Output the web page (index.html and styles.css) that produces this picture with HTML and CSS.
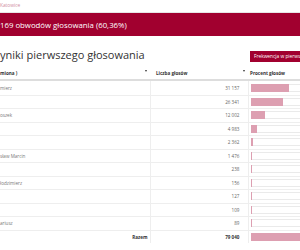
FILE: index.html
```html
<!DOCTYPE html>
<html lang="pl">
<head>
<meta charset="utf-8">
<link rel="stylesheet" href="styles.css">
</head>
<body>
<div class="crumb">Katowice</div>
<div class="banner">169 obwodów głosowania (60,36%)</div>
<div class="titlebar">
  <h1 class="title">yniki pierwszego głosowania</h1>
  <button class="btn">Frekwencja w pierwszym głosowaniu</button>
</div>
<table class="results">
  <colgroup><col class="col-name"><col class="col-votes"><col class="col-pct"></colgroup>
  <thead>
    <tr>
      <th class="c-name">miona )<span class="sort"></span></th>
      <th class="c-votes">Liczba głosów<span class="sort"></span></th>
      <th class="c-pct">Procent głosów</th>
    </tr>
  </thead>
  <tbody>
    <tr><td class="c-name">mierz</td><td class="c-votes">31 157</td><td class="c-pct"><div class="track"><div class="fill" style="width:39.42%"></div></div></td></tr>
    <tr><td class="c-name"></td><td class="c-votes">26 341</td><td class="c-pct"><div class="track"><div class="fill" style="width:33.33%"></div></div></td></tr>
    <tr><td class="c-name">oszek</td><td class="c-votes">12 002</td><td class="c-pct"><div class="track"><div class="fill" style="width:15.18%"></div></div></td></tr>
    <tr><td class="c-name"></td><td class="c-votes">4 983</td><td class="c-pct"><div class="track"><div class="fill" style="width:6.30%"></div></div></td></tr>
    <tr><td class="c-name"></td><td class="c-votes">2 362</td><td class="c-pct"><div class="track"><div class="fill" style="width:2.99%"></div></div></td></tr>
    <tr><td class="c-name">sław Marcin</td><td class="c-votes">1 476</td><td class="c-pct"><div class="track"><div class="fill" style="width:1.87%"></div></div></td></tr>
    <tr><td class="c-name"></td><td class="c-votes">238</td><td class="c-pct"><div class="track"><div class="fill" style="width:0.30%"></div></div></td></tr>
    <tr><td class="c-name">łodzimierz</td><td class="c-votes">156</td><td class="c-pct"><div class="track"><div class="fill" style="width:0.20%"></div></div></td></tr>
    <tr><td class="c-name"></td><td class="c-votes">127</td><td class="c-pct"><div class="track"><div class="fill" style="width:0.16%"></div></div></td></tr>
    <tr><td class="c-name"></td><td class="c-votes">109</td><td class="c-pct"><div class="track"><div class="fill" style="width:0.14%"></div></div></td></tr>
    <tr><td class="c-name">ariusz</td><td class="c-votes">89</td><td class="c-pct"><div class="track"><div class="fill" style="width:0.11%"></div></div></td></tr>
  </tbody>
  <tfoot>
    <tr class="total"><td class="c-name">Razem</td><td class="c-votes">79 040</td><td class="c-pct"><div class="track"><div class="fill" style="width:100%"></div></div></td></tr>
  </tfoot>
</table>
</body>
</html>
```
FILE: styles.css
```css
html, body {
  margin: 0;
  padding: 0;
  overflow: hidden;
  background: #ffffff;
}
body {
  width: 300px;
  height: 250px;
  font-family: "Open Sans", "DejaVu Sans", sans-serif;
  color: #333333;
}
.crumb {
  height: 12px;
  line-height: 11px;
  font-size: 4.8px;
  color: #cf8a9e;
  white-space: nowrap;
}
.banner {
  border-top: 1px solid #e6e6e6;
  background: #a1002f;
  color: #ffffff;
  font-size: 7.8px;
  line-height: 21px;
  padding-top: 2px;
  height: 21px;
  white-space: nowrap;
}
.titlebar {
  display: flex;
  align-items: flex-start;
  padding-top: 11px;
  padding-bottom: 4px;
  width: 400px;
}
.title {
  flex: 0 0 250px;
  margin: 0;
  font-size: 11px;
  font-weight: 400;
  line-height: 15px;
  color: #333333;
  white-space: nowrap;
}
.btn {
  margin-top: 4px;
  height: 11px;
  padding: 0 4px;
  border: none;
  background: #a1002f;
  color: #ffffff;
  font-family: "Open Sans", "DejaVu Sans", sans-serif;
  font-size: 4.8px;
  line-height: 11px;
  white-space: nowrap;
}
.results {
  width: 400px;
  table-layout: fixed;
  border-collapse: collapse;
  font-size: 4.6px;
}
.col-name { width: 150px; }
.col-votes { width: 98px; }
.col-pct { width: 152px; }
.results th {
  height: 13px;
  padding: 0;
  font-weight: 700;
  color: #333333;
  text-align: left;
  border-bottom: 2px solid #dddddd;
  position: relative;
  white-space: nowrap;
}
.results th.c-votes { padding-left: 6px; }
.results th.c-pct { padding-left: 2px; }
.sort {
  position: absolute;
  right: 3px;
  top: 4px;
  width: 0;
  height: 0;
  border-left: 1.5px solid transparent;
  border-right: 1.5px solid transparent;
  border-top: 2px solid #333333;
}
.results td {
  height: 12.5px;
  padding: 0;
  border-top: 1px solid #eeeeee;
  color: #666666;
  white-space: nowrap;
  overflow: hidden;
}
.results tbody tr:first-child td { border-top: none; height: 13.5px; }
.results td.c-votes {
  text-align: right;
  padding-right: 8px;
  border-left: 1px solid #eeeeee;
}
.results td.c-pct {
  border-left: 1px solid #eeeeee;
  padding-left: 2px;
}
.results td.c-name { color: #777777; }
.total td { font-weight: 700; color: #333333; }
.total td.c-name { text-align: right; padding-right: 2px; color: #333333; }
.total td.c-votes { color: #333333; }
.track {
  width: 100px;
  height: 8px;
  box-sizing: border-box;
  border: 1px solid #eaeaea;
  position: relative;
}
.fill {
  position: absolute;
  left: -1px;
  top: -1px;
  bottom: -1px;
  background: #dd9fb1;
}
```
